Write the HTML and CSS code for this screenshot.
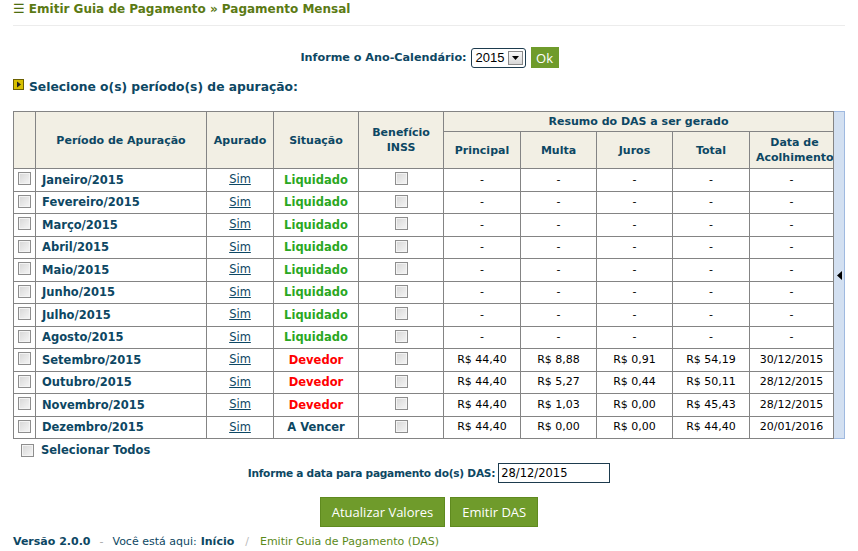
FILE: index.html
```html
<!DOCTYPE html>
<html lang="pt-BR">
<head>
<meta charset="utf-8">
<title>Emitir Guia de Pagamento</title>
<link rel="stylesheet" href="styles.css">
</head>
<body>
<div class="page">
  <h1 class="title"><span class="menu">&#9776;</span> Emitir Guia de Pagamento » Pagamento Mensal</h1>

  <div class="year-row">
    <label class="lbl">Informe o Ano-Calendário:</label>
    <div class="select"><span class="sel-val">2015</span><span class="sel-btn"><svg width="7" height="4" viewBox="0 0 7 4"><path d="M0 0H7L3.5 4Z" fill="#000"/></svg></span></div>
    <button class="ok">Ok</button>
  </div>

  <h2 class="section"><span class="bullet"><svg width="9" height="9" viewBox="0 0 9 9"><path d="M3 1.5L7 4.5L3 7.5Z" fill="#222"/></svg></span>Selecione o(s) período(s) de apuração:</h2>

  <div class="table-wrap">
    <table class="grid">
      <colgroup>
        <col style="width:22px"><col style="width:171px"><col style="width:67px"><col style="width:85px"><col style="width:85px"><col style="width:77px"><col style="width:76px"><col style="width:76px"><col style="width:77px"><col style="width:84px">
      </colgroup>
      <thead>
        <tr class="h1">
          <th rowspan="2"></th>
          <th rowspan="2">Período de Apuração</th>
          <th rowspan="2">Apurado</th>
          <th rowspan="2">Situação</th>
          <th rowspan="2">Benefício<br>INSS</th>
          <th colspan="5">Resumo do DAS a ser gerado</th>
        </tr>
        <tr class="h2">
          <th>Principal</th><th>Multa</th><th>Juros</th><th>Total</th><th class="clip"><div>Data de<br>Acolhimento</div></th>
        </tr>
      </thead>
      <tbody>
        <tr><td class="cb"><input type="checkbox"></td><td class="per">Janeiro/2015</td><td class="c"><a>Sim</a></td><td class="c liq">Liquidado</td><td class="cb"><input type="checkbox"></td><td class="c">-</td><td class="c">-</td><td class="c">-</td><td class="c">-</td><td class="c">-</td></tr>
        <tr><td class="cb"><input type="checkbox"></td><td class="per">Fevereiro/2015</td><td class="c"><a>Sim</a></td><td class="c liq">Liquidado</td><td class="cb"><input type="checkbox"></td><td class="c">-</td><td class="c">-</td><td class="c">-</td><td class="c">-</td><td class="c">-</td></tr>
        <tr><td class="cb"><input type="checkbox"></td><td class="per">Março/2015</td><td class="c"><a>Sim</a></td><td class="c liq">Liquidado</td><td class="cb"><input type="checkbox"></td><td class="c">-</td><td class="c">-</td><td class="c">-</td><td class="c">-</td><td class="c">-</td></tr>
        <tr><td class="cb"><input type="checkbox"></td><td class="per">Abril/2015</td><td class="c"><a>Sim</a></td><td class="c liq">Liquidado</td><td class="cb"><input type="checkbox"></td><td class="c">-</td><td class="c">-</td><td class="c">-</td><td class="c">-</td><td class="c">-</td></tr>
        <tr><td class="cb"><input type="checkbox"></td><td class="per">Maio/2015</td><td class="c"><a>Sim</a></td><td class="c liq">Liquidado</td><td class="cb"><input type="checkbox"></td><td class="c">-</td><td class="c">-</td><td class="c">-</td><td class="c">-</td><td class="c">-</td></tr>
        <tr><td class="cb"><input type="checkbox"></td><td class="per">Junho/2015</td><td class="c"><a>Sim</a></td><td class="c liq">Liquidado</td><td class="cb"><input type="checkbox"></td><td class="c">-</td><td class="c">-</td><td class="c">-</td><td class="c">-</td><td class="c">-</td></tr>
        <tr><td class="cb"><input type="checkbox"></td><td class="per">Julho/2015</td><td class="c"><a>Sim</a></td><td class="c liq">Liquidado</td><td class="cb"><input type="checkbox"></td><td class="c">-</td><td class="c">-</td><td class="c">-</td><td class="c">-</td><td class="c">-</td></tr>
        <tr><td class="cb"><input type="checkbox"></td><td class="per">Agosto/2015</td><td class="c"><a>Sim</a></td><td class="c liq">Liquidado</td><td class="cb"><input type="checkbox"></td><td class="c">-</td><td class="c">-</td><td class="c">-</td><td class="c">-</td><td class="c">-</td></tr>
        <tr><td class="cb"><input type="checkbox"></td><td class="per">Setembro/2015</td><td class="c"><a>Sim</a></td><td class="c dev">Devedor</td><td class="cb"><input type="checkbox"></td><td class="c">R$ 44,40</td><td class="c">R$ 8,88</td><td class="c">R$ 0,91</td><td class="c">R$ 54,19</td><td class="c">30/12/2015</td></tr>
        <tr><td class="cb"><input type="checkbox"></td><td class="per">Outubro/2015</td><td class="c"><a>Sim</a></td><td class="c dev">Devedor</td><td class="cb"><input type="checkbox"></td><td class="c">R$ 44,40</td><td class="c">R$ 5,27</td><td class="c">R$ 0,44</td><td class="c">R$ 50,11</td><td class="c">28/12/2015</td></tr>
        <tr><td class="cb"><input type="checkbox"></td><td class="per">Novembro/2015</td><td class="c"><a>Sim</a></td><td class="c dev">Devedor</td><td class="cb"><input type="checkbox"></td><td class="c">R$ 44,40</td><td class="c">R$ 1,03</td><td class="c">R$ 0,00</td><td class="c">R$ 45,43</td><td class="c">28/12/2015</td></tr>
        <tr><td class="cb"><input type="checkbox"></td><td class="per">Dezembro/2015</td><td class="c"><a>Sim</a></td><td class="c venc">A Vencer</td><td class="cb"><input type="checkbox"></td><td class="c">R$ 44,40</td><td class="c">R$ 0,00</td><td class="c">R$ 0,00</td><td class="c">R$ 44,40</td><td class="c">20/01/2016</td></tr>
      </tbody>
    </table>
    <div class="side"><svg width="5" height="9" viewBox="0 0 5 9"><path d="M5 0V9L0 4.5Z" fill="#000"/></svg></div>
  </div>

  <div class="all"><input type="checkbox"><span>Selecionar Todos</span></div>

  <div class="date-row">
    <label class="lbl">Informe a data para pagamento do(s) DAS:</label>
    <div class="date-input">28/12/2015</div>
  </div>

  <div class="buttons">
    <button class="btn">Atualizar Valores</button>
    <button class="btn">Emitir DAS</button>
  </div>

  <div class="footer">
    <b>Versão 2.0.0</b><span class="dash">-</span><span>Você está aqui:</span><b class="home">Início</b><span class="slash">/</span><span class="crumb">Emitir Guia de Pagamento (DAS)</span>
  </div>
</div>
</body>
</html>
```

FILE: styles.css
```css
html, body { margin: 0; padding: 0; background: #fff; }
body { font-family: "DejaVu Sans", Verdana, sans-serif; color: #0d4763; }
.page { padding: 0 13px; }

.title {
  margin: 0;
  padding: 0 0 7px 0;
  font-size: 12px;
  font-weight: bold;
  color: #5b7a14;
  border-bottom: 1px solid #ececec;
  line-height: 17px;
}
.title .menu { color: #4d6d10; font-weight: bold; font-size: 13px; }

.year-row {
  display: flex;
  justify-content: center;
  align-items: center;
  margin-top: 21px;
  padding-left: 1px;
  height: 21px;
}
.lbl { font-size: 11.2px; font-weight: bold; color: #0d4763; margin-right: 4px; }
.select {
  display: flex;
  align-items: center;
  height: 20px;
  width: 55px;
  box-sizing: border-box;
  border: 1px solid #1d3b4e;
  border-radius: 3px;
  padding: 0 2px 0 4px;
  font-family: "Liberation Sans", Arial, sans-serif;
  font-size: 13px;
  color: #000;
  justify-content: space-between;
}
.sel-btn {
  width: 15px; height: 14px;
  box-sizing: border-box;
  border: 1px solid #8a8a8a;
  background: linear-gradient(#f8f8f8, #d8d8d8);
  display: flex; align-items: center; justify-content: center;
}
.ok {
  margin-left: 5px;
  height: 21px;
  width: 28px;
  border: 0;
  padding: 0;
  background: #6f9b2b;
  color: #fff;
  font-family: "Open Sans", "DejaVu Sans", sans-serif;
  font-size: 13px;
}

.section {
  margin: 11px 0 0 0;
  font-size: 12.3px;
  font-weight: bold;
  color: #0d4763;
  display: flex;
  align-items: center;
  height: 16px;
}
.bullet {
  width: 9px; height: 9px;
  background: #d7c000;
  border: 1px solid #6b6000;
  margin-right: 5px;
  margin-top: -6px;
  display: flex;
}

.table-wrap {
  display: flex;
  margin-top: 16px;
}
.grid {
  border-collapse: collapse;
  table-layout: fixed;
  width: 821px;
  font-size: 11px;
}
.grid th, .grid td { border: 1px solid #848484; padding: 0; }
.grid th {
  background: #f2efe4;
  font-weight: bold;
  color: #0d4763;
  font-size: 11px;
  line-height: 15px;
}
.grid tr.h1 th { height: 19px; }
.grid tr.h2 th { height: 36px; }
.grid th.clip div { overflow: hidden; white-space: nowrap; padding-left: 6px; text-align: center; }
.grid tbody tr { height: 22.5px; }
.grid td { color: #000; line-height: 14px; }
.grid td.c { text-align: center; }
.grid td.per { font-weight: bold; color: #0d4763; font-size: 11.5px; padding-left: 6px; }
.grid td a { color: #0d4763; text-decoration: underline; font-size: 11.5px; }
.grid td.liq { color: #2aa722; font-weight: bold; font-size: 11.5px; }
.grid td.dev { color: #ff0000; font-weight: bold; font-size: 11.5px; }
.grid td.venc { color: #0d4763; font-weight: bold; font-size: 11.5px; }
.grid td.cb { vertical-align: top; padding-top: 3px; }
.grid td.cb input { display: block; margin: 0 auto; }

input[type=checkbox] {
  appearance: none;
  -webkit-appearance: none;
  width: 13px; height: 13px;
  margin: 0;
  box-sizing: border-box;
  border: 1px solid #8e8e8e;
  background: linear-gradient(135deg, #d6d6d6, #f6f6f6);
  box-shadow: inset 0 0 0 1px #f4f4f4;
  display: inline-block;
  vertical-align: top;
}

.side {
  width: 11px;
  box-sizing: border-box;
  background: #d3e0f1;
  border: 1px solid #9fb9e0;
  border-left: 0;
  display: flex;
  align-items: center;
  justify-content: center;
}

.all {
  display: flex;
  align-items: center;
  margin-top: 4px;
  padding-left: 8px;
  font-size: 11.5px;
  font-weight: bold;
}
.all input { margin-right: 7px; }

.date-row {
  display: flex;
  justify-content: center;
  align-items: center;
  margin-top: 6px;
}
.date-row .lbl { font-size: 10.6px; letter-spacing: -0.25px; margin-right: 3px; }
.date-input {
  width: 112px; height: 20px;
  box-sizing: border-box;
  border: 1px solid #1d3b4e;
  font-family: "DejaVu Sans", sans-serif;
  font-size: 11.5px;
  color: #000;
  padding: 2px 0 0 2px;
}

.buttons {
  display: flex;
  justify-content: center;
  gap: 5px;
  margin-top: 14px;
}
.btn {
  height: 30px;
  border: 1px solid #5f8a1f;
  background: #6f9b2b;
  color: #fff;
  font-family: "Open Sans", "DejaVu Sans", sans-serif;
  font-size: 13px;
  padding: 0 11px;
}

.footer {
  margin-top: 8px;
  font-size: 11px;
  color: #0d4763;
  display: flex;
  gap: 0;
}
.footer .dash { color: #aaa; margin: 0 9px; }
.footer .home { margin-left: 4px; }
.footer .slash { color: #bbb; margin: 0 11px; }
.footer .crumb { color: #5b8a1a; }
```
